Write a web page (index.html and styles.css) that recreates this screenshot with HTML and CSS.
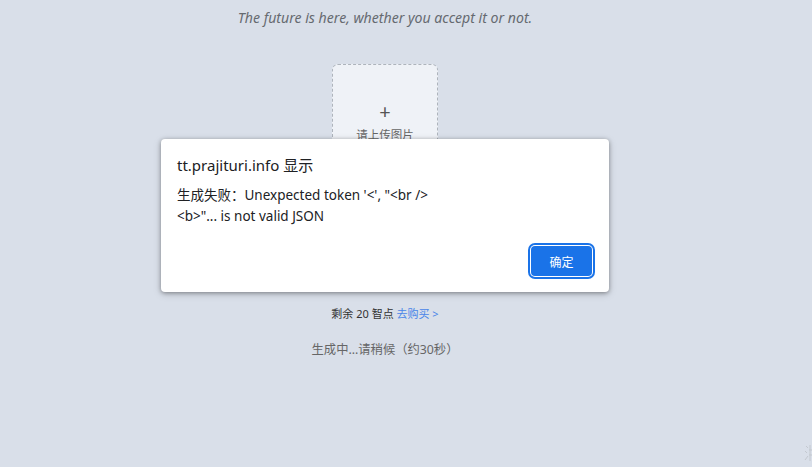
FILE: index.html
```html
<!DOCTYPE html>
<html lang="zh-CN">
<head>
<meta charset="utf-8">
<title>Upload</title>
<link rel="stylesheet" href="styles.css">
</head>
<body>
<main class="page">
  <p class="motto">The future is here, whether you accept it or not.</p>
  <div class="upload">
    <span class="plus">+</span>
    <span class="upload-label">请上传图片</span>
  </div>
  <div class="hidden-area"></div>
  <p class="points">剩余 20 智点 <a class="buy" href="#">去购买 &gt;</a></p>
  <p class="status">生成中...请稍候（约30秒）</p>
</main>
<svg class="corner" width="8" height="20" viewBox="0 0 8 20" aria-hidden="true">
  <path d="M2 3l2 2M1 8l2 2M1 17l3-4M6 2v16M5 7h3M5 12h3" stroke="#c3c8cf" stroke-width="1" fill="none"/>
</svg>
<div class="dialog" role="alertdialog">
  <div class="dialog-title">tt.prajituri.info 显示</div>
  <div class="dialog-msg">生成失败：Unexpected token '&lt;', "&lt;br /&gt;<br>&lt;b&gt;"... is not valid JSON</div>
  <div class="dialog-actions">
    <button class="ok">确定</button>
  </div>
</div>
</body>
</html>
```
FILE: styles.css
```css
html, body {
  margin: 0;
  padding: 0;
}
body {
  background: #d9dfe9;
  width: 812px;
  height: 467px;
  overflow: hidden;
  position: relative;
  font-family: "Noto Sans", "Noto Sans CJK SC", sans-serif;
}
.page {
  width: 770px;
  display: flex;
  flex-direction: column;
  align-items: center;
}
.motto {
  margin: 8px 0 0;
  font-style: italic;
  font-size: 14.1px;
  line-height: 20px;
  color: #666a70;
}
.upload {
  margin-top: 36px;
  width: 104px;
  height: 104px;
  border: 1px dashed #aeb4bc;
  border-radius: 6px;
  background: #eff2f7;
  display: flex;
  flex-direction: column;
  align-items: center;
  justify-content: center;
  color: #666;
}
.plus {
  font-size: 20px;
  line-height: 20px;
  margin-top: 10px;
  color: #555;
}
.upload-label {
  font-size: 11.5px;
  line-height: 16px;
  margin-top: 5px;
}
.hidden-area {
  height: 136px;
}
.points {
  margin: 0;
  font-size: 11px;
  line-height: 16px;
  color: #333;
}
.buy {
  color: #4a86e8;
  text-decoration: none;
}
.status {
  margin: 19px 0 0;
  font-size: 12.3px;
  line-height: 18px;
  color: #666;
}
.corner {
  position: absolute;
  right: 0;
  bottom: 4px;
}
.dialog {
  position: absolute;
  left: 161px;
  top: 139px;
  width: 448px;
  height: 153px;
  box-sizing: border-box;
  background: #fff;
  border-radius: 4px;
  box-shadow: 0 1px 4px rgba(0, 0, 0, 0.35), 0 2px 8px rgba(0, 0, 0, 0.15);
  padding: 15px 16px 16px;
  display: flex;
  flex-direction: column;
  color: #202124;
}
.dialog-title {
  font-size: 15px;
  line-height: 22px;
}
.dialog-msg {
  margin-top: 9px;
  font-size: 13.5px;
  line-height: 21px;
}
.dialog-actions {
  margin-top: auto;
  display: flex;
  justify-content: flex-end;
  padding-right: 1px;
}
.ok {
  width: 61px;
  height: 30px;
  border: none;
  border-radius: 4px;
  background: #1a73e8;
  color: #fff;
  font-family: "Noto Sans CJK SC", sans-serif;
  font-size: 12px;
  box-shadow: 0 0 0 1px #fff, 0 0 0 3px #1a73e8;
  padding: 0;
}
```
